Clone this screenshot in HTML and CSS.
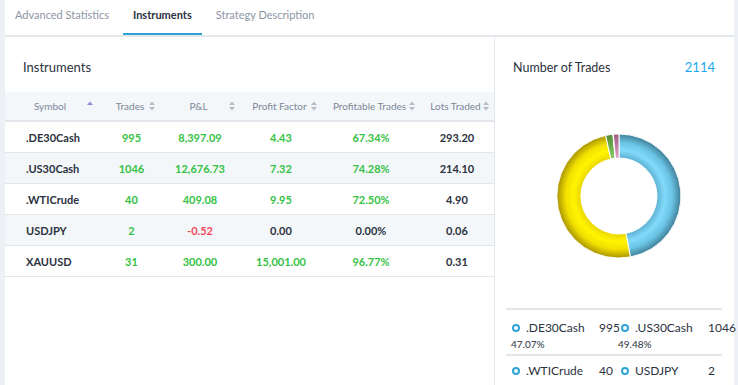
FILE: index.html
```html
<!DOCTYPE html>
<html lang="en">
<head>
  <meta charset="UTF-8" />
  <title>Instruments</title>
  <link rel="stylesheet" href="styles.css">
</head>
<body>
  <div class="page">
    <nav class="tabs">
      <a class="tab">Advanced Statistics</a>
      <a class="tab active">Instruments</a>
      <a class="tab">Strategy Description</a>
    </nav>

    <div class="content">
      <section class="left">
        <h2 class="title">Instruments</h2>
        <table class="grid">
          <colgroup>
            <col style="width:98px"><col style="width:57px"><col style="width:80px">
            <col style="width:82px"><col style="width:98px"><col style="width:74px">
          </colgroup>
          <thead>
            <tr>
              <th><div class="th"><span>Symbol</span>
                <svg class="sort" width="6" height="10" viewBox="0 0 6 10"><path d="M3 0.5 L6 4 L0 4 Z" fill="#8a8fdc"/></svg></div></th>
              <th><div class="th"><span>Trades</span>
                <svg class="sort" width="6" height="10" viewBox="0 0 6 10"><path d="M3 0.5 L6 4 L0 4 Z M3 9.5 L6 6 L0 6 Z" fill="#b6bbc6"/></svg></div></th>
              <th><div class="th"><span>P&amp;L</span>
                <svg class="sort" width="6" height="10" viewBox="0 0 6 10"><path d="M3 0.5 L6 4 L0 4 Z M3 9.5 L6 6 L0 6 Z" fill="#b6bbc6"/></svg></div></th>
              <th><div class="th"><span>Profit Factor</span>
                <svg class="sort" width="6" height="10" viewBox="0 0 6 10"><path d="M3 0.5 L6 4 L0 4 Z M3 9.5 L6 6 L0 6 Z" fill="#b6bbc6"/></svg></div></th>
              <th><div class="th"><span>Profitable Trades</span>
                <svg class="sort" width="6" height="10" viewBox="0 0 6 10"><path d="M3 0.5 L6 4 L0 4 Z M3 9.5 L6 6 L0 6 Z" fill="#b6bbc6"/></svg></div></th>
              <th><div class="th"><span>Lots Traded</span>
                <svg class="sort" width="6" height="10" viewBox="0 0 6 10"><path d="M3 0.5 L6 4 L0 4 Z M3 9.5 L6 6 L0 6 Z" fill="#b6bbc6"/></svg></div></th>
            </tr>
          </thead>
          <tbody>
            <tr>
              <td class="sym">.DE30Cash</td><td class="pos">995</td><td class="pos">8,397.09</td>
              <td class="pos">4.43</td><td class="pos">67.34%</td><td>293.20</td>
            </tr>
            <tr>
              <td class="sym">.US30Cash</td><td class="pos">1046</td><td class="pos">12,676.73</td>
              <td class="pos">7.32</td><td class="pos">74.28%</td><td>214.10</td>
            </tr>
            <tr>
              <td class="sym">.WTICrude</td><td class="pos">40</td><td class="pos">409.08</td>
              <td class="pos">9.95</td><td class="pos">72.50%</td><td>4.90</td>
            </tr>
            <tr>
              <td class="sym">USDJPY</td><td class="pos">2</td><td class="neg">-0.52</td>
              <td>0.00</td><td>0.00%</td><td>0.06</td>
            </tr>
            <tr>
              <td class="sym">XAUUSD</td><td class="pos">31</td><td class="pos">300.00</td>
              <td class="pos">15,001.00</td><td class="pos">96.77%</td><td>0.31</td>
            </tr>
          </tbody>
        </table>
      </section>

      <aside class="right">
        <div class="head">
          <h2 class="title">Number of Trades</h2>
          <span class="total">2114</span>
        </div>

        <svg class="donut" width="238" height="216" viewBox="0 0 238 216">
          <defs>
            <radialGradient id="gBlue" gradientUnits="userSpaceOnUse" cx="124" cy="104" r="62">
              <stop offset="0.6" stop-color="#5aaed0"/>
              <stop offset="0.74" stop-color="#82daf9"/>
              <stop offset="0.86" stop-color="#6cc4e6"/>
              <stop offset="1" stop-color="#3f7f98"/>
            </radialGradient>
            <radialGradient id="gYellow" gradientUnits="userSpaceOnUse" cx="124" cy="104" r="62">
              <stop offset="0.6" stop-color="#e8d400"/>
              <stop offset="0.74" stop-color="#fff500"/>
              <stop offset="0.86" stop-color="#f2e000"/>
              <stop offset="1" stop-color="#a99400"/>
            </radialGradient>
            <radialGradient id="gGreen" gradientUnits="userSpaceOnUse" cx="124" cy="104" r="62">
              <stop offset="0.6" stop-color="#8fcf6a"/>
              <stop offset="1" stop-color="#4f8a35"/>
            </radialGradient>
            <radialGradient id="gPink" gradientUnits="userSpaceOnUse" cx="124" cy="104" r="62">
              <stop offset="0.6" stop-color="#e6a0c8"/>
              <stop offset="1" stop-color="#9a5c80"/>
            </radialGradient>
          </defs>
          <g id="slices" stroke="#fff" stroke-width="1"></g>
        </svg>

        <div class="legend">
          <div class="legend-row">
            <div class="item">
              <div class="line"><i class="dot"></i><span class="name">.DE30Cash</span><span class="val">995</span></div>
              <div class="pct">47.07%</div>
            </div>
            <div class="item second">
              <div class="line"><i class="dot"></i><span class="name">.US30Cash</span><span class="val">1046</span></div>
              <div class="pct">49.48%</div>
            </div>
          </div>
          <div class="legend-row">
            <div class="item">
              <div class="line"><i class="dot"></i><span class="name">.WTICrude</span><span class="val">40</span></div>
            </div>
            <div class="item second">
              <div class="line"><i class="dot"></i><span class="name">USDJPY</span><span class="val">2</span></div>
            </div>
          </div>
        </div>
      </aside>
    </div>
  </div>

  <script>
    // donut slices, clockwise from 12 o'clock
    const data = [
      { v: 995, fill: 'url(#gBlue)' },
      { v: 1046, fill: 'url(#gYellow)' },
      { v: 40, fill: 'url(#gGreen)' },
      { v: 2, fill: '#c9c9c9' },
      { v: 31, fill: 'url(#gPink)' }
    ];
    const cx = 124, cy = 104, R = 62, r = 38;
    const total = data.reduce((s, d) => s + d.v, 0);
    const g = document.getElementById('slices');
    let a0 = -Math.PI / 2;

    function pt(rad, a) {
      return (cx + rad * Math.cos(a)).toFixed(2) + ' ' + (cy + rad * Math.sin(a)).toFixed(2);
    }

    data.forEach(d => {
      const a1 = a0 + d.v / total * Math.PI * 2;
      const big = a1 - a0 > Math.PI ? 1 : 0;
      const path = document.createElementNS('http://www.w3.org/2000/svg', 'path');
      path.setAttribute('d',
        'M' + pt(R, a0) + ' A' + R + ' ' + R + ' 0 ' + big + ' 1 ' + pt(R, a1) +
        ' L' + pt(r, a1) + ' A' + r + ' ' + r + ' 0 ' + big + ' 0 ' + pt(r, a0) + ' Z');
      path.setAttribute('fill', d.fill);
      g.appendChild(path);
      a0 = a1;
    });
  </script>
</body>
</html>
```

FILE: styles.css
```css
:root {
  --bg: #edf0f4;
  --line: #e3e6ea;
  --text: #2b3240;
  --muted: #7b8797;
  --green: #35c245;
  --red: #f0485a;
  --accent: #2fa4d5;
}

body {
  margin: 0;
  font-family: Lato, 'Open Sans', sans-serif;
  background: var(--bg);
  color: var(--text);
  overflow: hidden;
}

.page {
  margin: 0 4px 0 5px;
  height: 385px;
  background: #fff;
}

.tabs {
  display: flex;
  gap: 4px;
  height: 35px;
  border-bottom: 2px solid var(--line);
}

.tab {
  padding: 0 10px;
  font-size: 11px;
  line-height: 29px;
  color: #8d96a3;
  height: 33px;
  box-sizing: border-box;
}

.tab.active {
  color: var(--text);
  font-weight: bold;
  border-bottom: 2px solid var(--accent);
  height: 35px;
}

.content {
  display: flex;
  height: 348px;
}

.left {
  width: 489px;
  flex: none;
  border-right: 1px solid var(--line);
}

.title {
  margin: 0;
  font-size: 13px;
  font-weight: normal;
  color: var(--text);
}

.left .title {
  padding: 5px 18px 0;
  line-height: 50px;
  height: 50px;
}

.grid {
  width: 489px;
  border-collapse: collapse;
  table-layout: fixed;
  font-size: 11px;
}

.grid thead tr {
  background: #f4f7fa;
  border-bottom: 2px solid var(--line);
}

.grid th {
  height: 28px;
  padding: 0 5px 0 8px;
  font-weight: normal;
  font-size: 10px;
  color: var(--muted);
  white-space: nowrap;
}

.th {
  display: flex;
  align-items: center;
}

.th span {
  flex: 1;
  text-align: center;
}

.sort {
  display: block;
  flex: none;
}

.grid th:first-child {
  padding-right: 10px;
}

.grid td {
  height: 30px;
  padding: 0;
  text-align: center;
  font-weight: bold;
  border-bottom: 1px solid var(--line);
}

.grid tbody tr:nth-child(even) {
  background: #f4f7fa;
}

.grid td.sym {
  text-align: left;
  padding-left: 21px;
}

.pos {
  color: var(--green);
}

.neg {
  color: var(--red);
}

.right {
  width: 238px;
  min-width: 0;
  display: flex;
  flex-direction: column;
}

.head {
  display: flex;
  justify-content: space-between;
  align-items: center;
  padding: 5px 18px 0;
  height: 50px;
  flex: none;
}

.right .title {
  font-size: 12.5px;
}

.total {
  color: #1ea7ec;
  font-size: 13px;
}

.donut {
  display: block;
  flex: none;
}

.legend {
  margin: 0 11px;
  border-top: 2px solid var(--line);
  flex: none;
}

.legend-row {
  display: grid;
  grid-template-columns: 112px 1fr;
  border-bottom: 2px solid var(--line);
  padding: 10px 0 4px;
}

.legend-row:last-child {
  border-bottom: none;
  padding-top: 7px;
}

.item .line {
  display: flex;
  align-items: center;
  font-size: 12px;
  line-height: 16px;
}

.item:first-child .line {
  padding-left: 6px;
}

.item.second .line {
  padding-left: 3px;
}

.dot {
  width: 4px;
  height: 4px;
  border: 2px solid var(--accent);
  border-radius: 50%;
  margin-right: 6px;
  flex: none;
}

.name {
  width: 73px;
  flex: none;
  white-space: nowrap;
}

.val {
  white-space: nowrap;
}

.pct {
  font-size: 10px;
  margin-top: 2px;
  padding-left: 5px;
  color: var(--text);
}

.item.second .pct {
  padding-left: 0;
}
```
